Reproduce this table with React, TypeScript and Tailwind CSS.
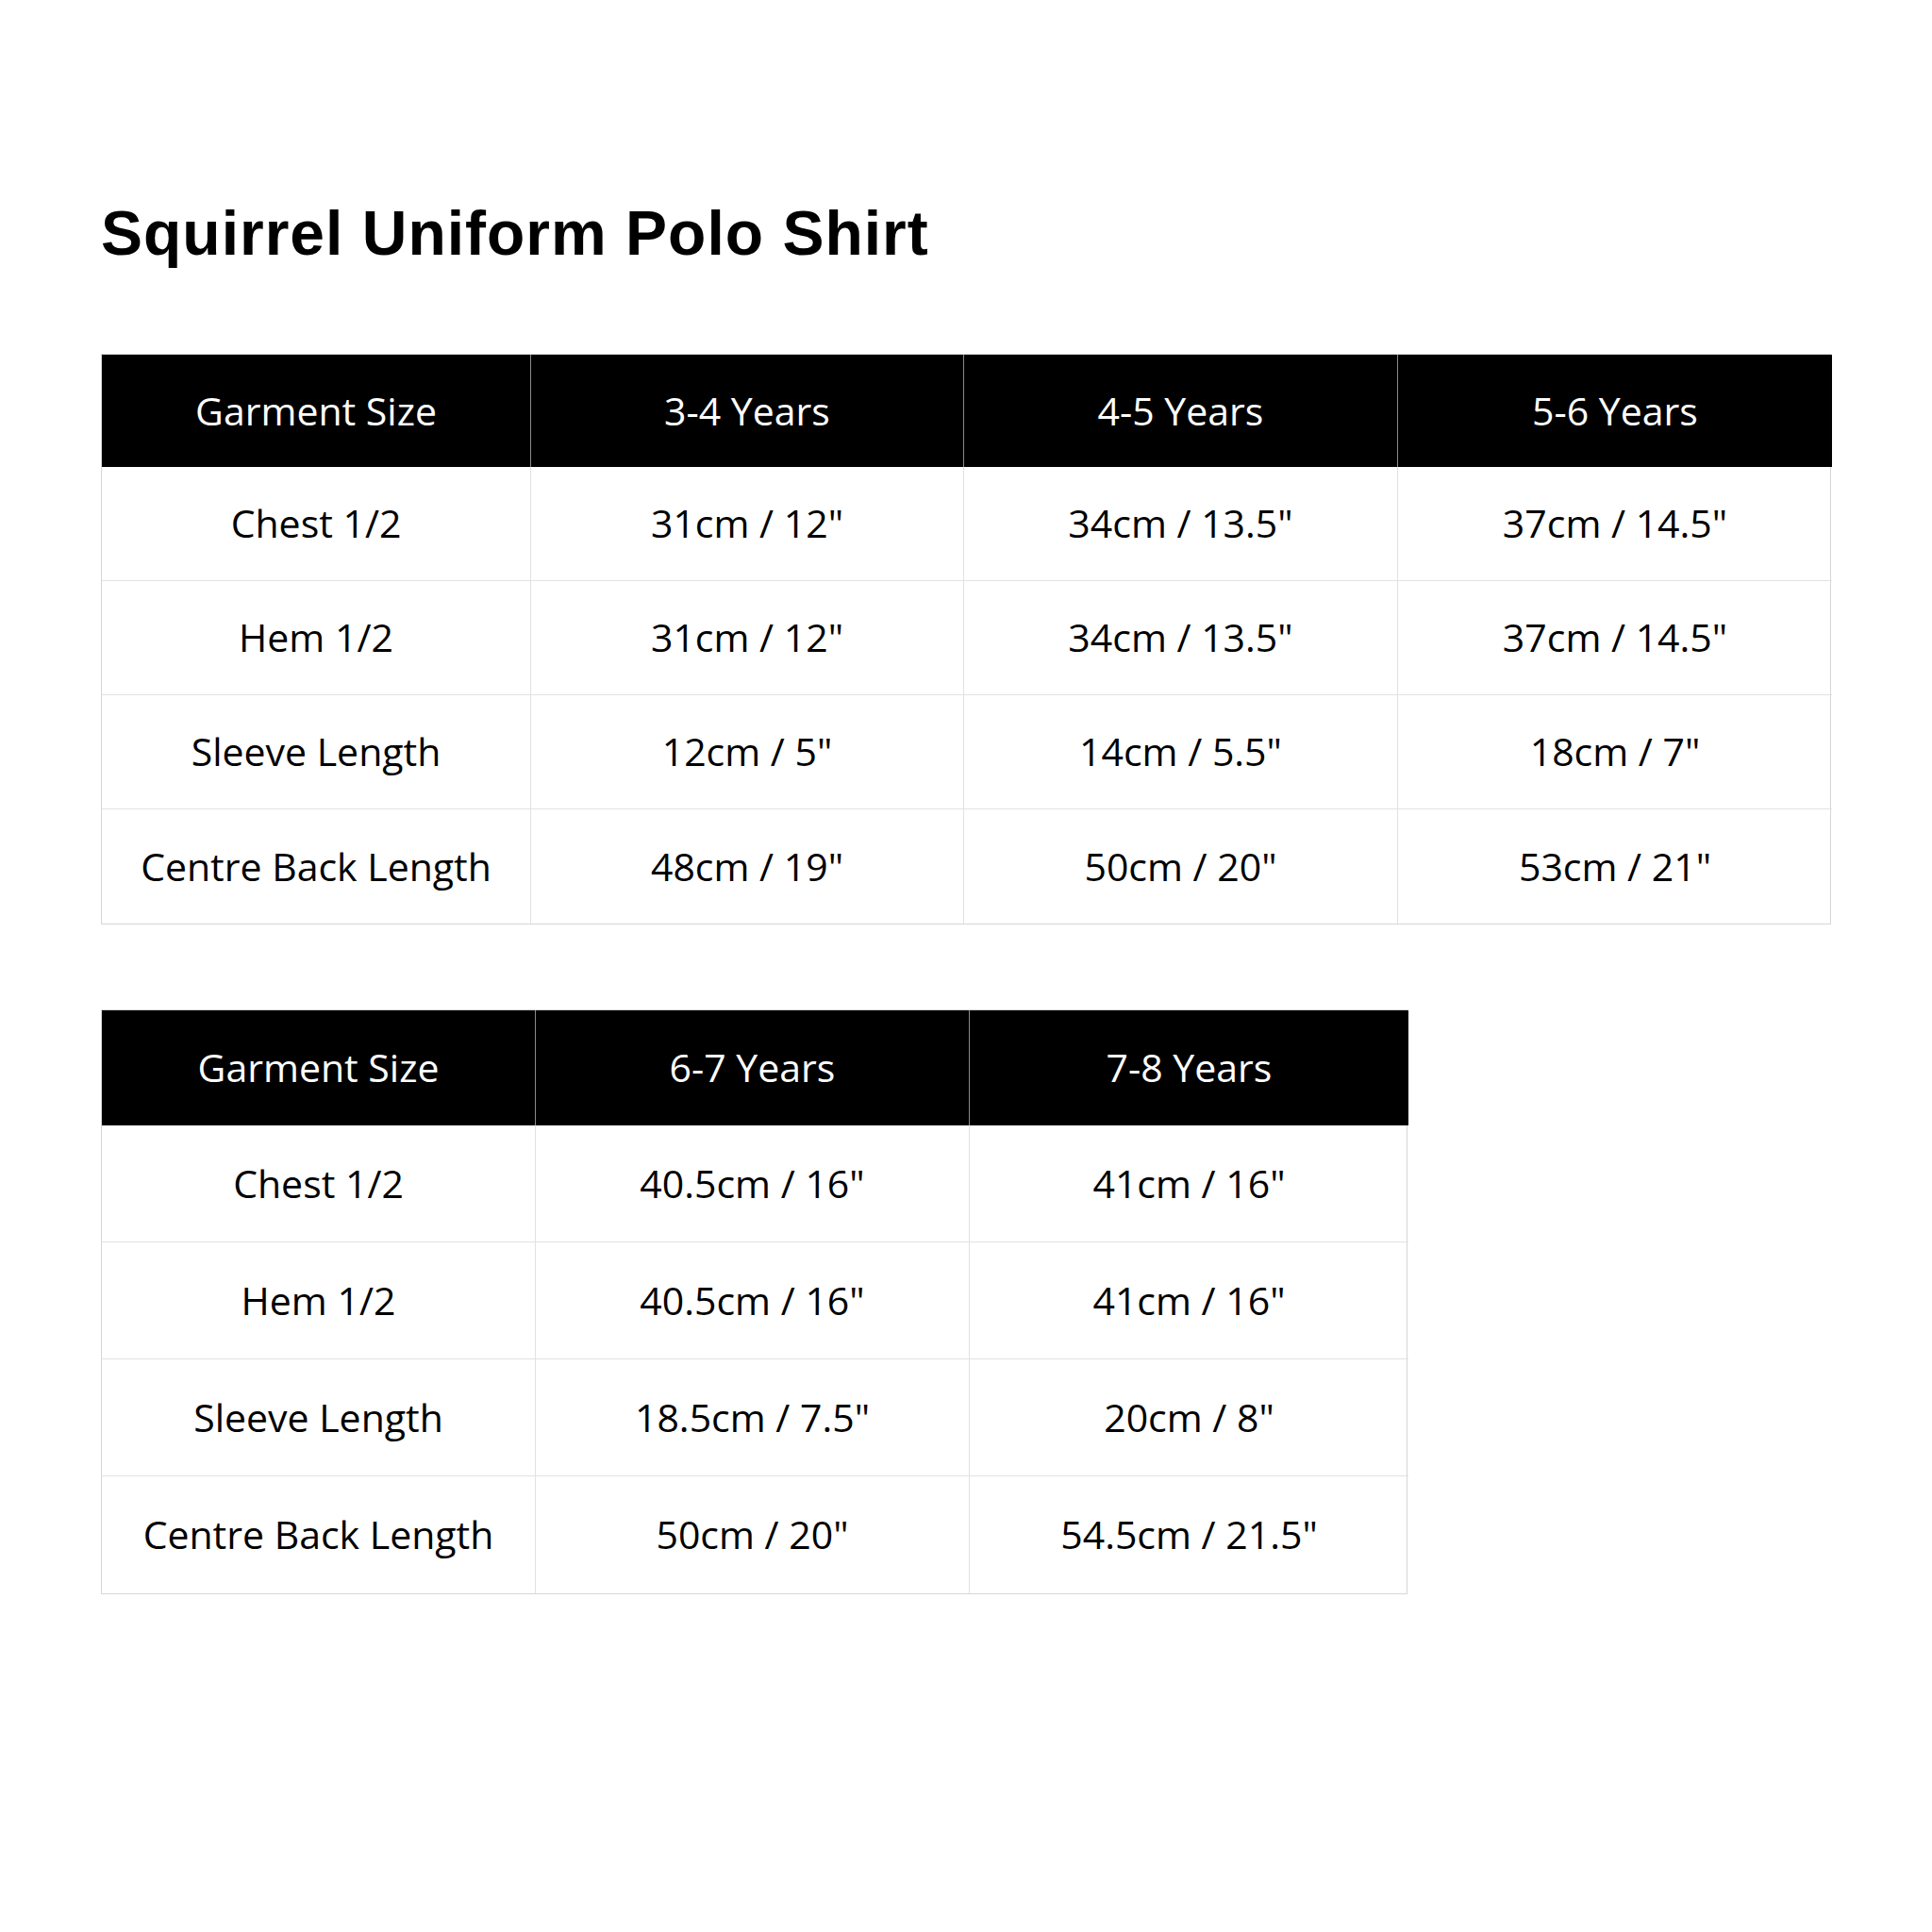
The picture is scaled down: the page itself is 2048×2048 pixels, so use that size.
import React from 'react';

type Table = {
  cols: string;
  headerH: string;
  rowH: string;
  width: string;
  head: string[];
  rows: string[][];
};

const labels = ['Chest 1/2', 'Hem 1/2', 'Sleeve Length', 'Centre Back Length'];

const tables: Table[] = [
  {
    cols: 'grid-cols-[455px_459px_460px_460px]',
    headerH: 'h-[119px]',
    rowH: 'h-[121px]',
    width: 'w-[1834px]',
    head: ['Garment Size', '3-4 Years', '4-5 Years', '5-6 Years'],
    rows: [
      ['31cm / 12"', '34cm / 13.5"', '37cm / 14.5"'],
      ['31cm / 12"', '34cm / 13.5"', '37cm / 14.5"'],
      ['12cm / 5"', '14cm / 5.5"', '18cm / 7"'],
      ['48cm / 19"', '50cm / 20"', '53cm / 21"'],
    ],
  },
  {
    cols: 'grid-cols-[460px_460px_465px]',
    headerH: 'h-[122px]',
    rowH: 'h-[124px]',
    width: 'w-[1385px]',
    head: ['Garment Size', '6-7 Years', '7-8 Years'],
    rows: [
      ['40.5cm / 16"', '41cm / 16"'],
      ['40.5cm / 16"', '41cm / 16"'],
      ['18.5cm / 7.5"', '20cm / 8"'],
      ['50cm / 20"', '54.5cm / 21.5"'],
    ],
  },
];

const SizeTable = ({ t }: { t: Table }) => (
  <div className={`grid ${t.cols} ${t.width} border border-[#d6d6d6]`}>
    {t.head.map((h, i) => (
      <div
        key={h}
        className={`${t.headerH} flex items-center justify-center bg-black text-white ${
          i < t.head.length - 1 ? 'border-r border-[#8a8a8a]' : ''
        }`}
      >
        {h}
      </div>
    ))}
    {t.rows.map((row, r) =>
      [labels[r], ...row].map((cell, c) => (
        <div
          key={`${r}-${c}`}
          className={`${t.rowH} flex items-center justify-center text-black ${
            c < row.length ? 'border-r border-[#e2e2e2]' : ''
          } ${r < t.rows.length - 1 ? 'border-b border-[#e2e2e2]' : ''}`}
        >
          {cell}
        </div>
      ))
    )}
  </div>
);

export default function App() {
  return (
    <div className="w-[2048px] h-[2048px] bg-white pl-[107px] pt-[214px] font-['Open_Sans',sans-serif] text-[41px]">
      <h1 className="font-['Liberation_Sans',Arial,sans-serif] font-bold text-[66px] leading-none tracking-[1px] text-black">
        Squirrel Uniform Polo Shirt
      </h1>
      <div className="mt-[95px] flex flex-col gap-[90px]">
        {tables.map((t, i) => (
          <SizeTable key={i} t={t} />
        ))}
      </div>
    </div>
  );
}
